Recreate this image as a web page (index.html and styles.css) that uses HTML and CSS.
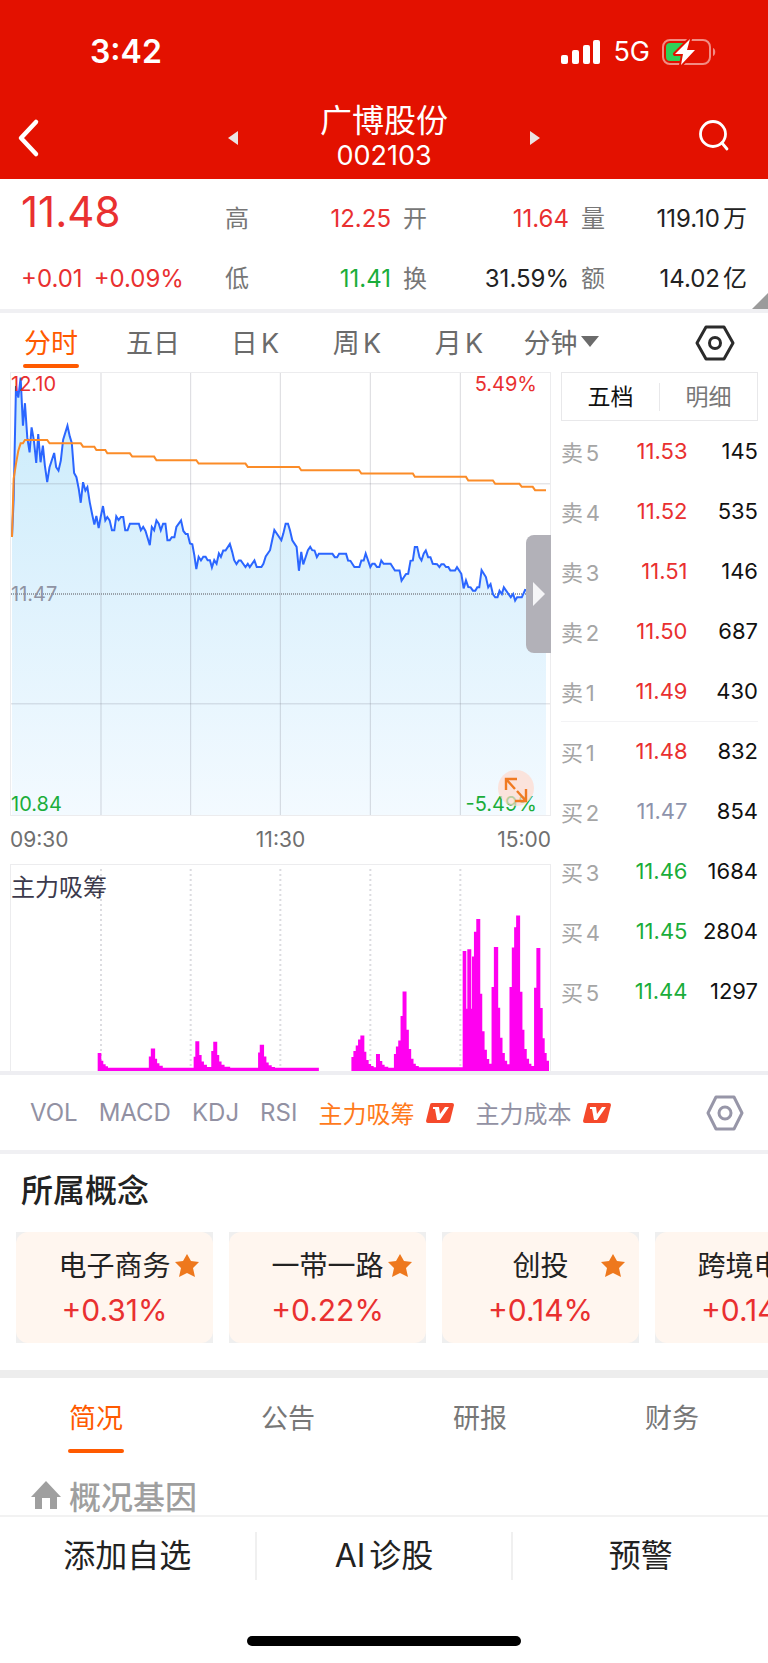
FILE: index.html
```
<!DOCTYPE html>
<html lang="zh-CN">
<head>
  <meta charset="UTF-8">
  <meta name="viewport" content="width=device-width, initial-scale=1.0, viewport-fit=cover">
  <meta name="format-detection" content="telephone=no">
  <title>广博股份 002103</title>
  <link rel="stylesheet" href="styles.css">
</head>
<body>
  <header class="header">
    <div class="status">
      <span class="status-time">3:42</span>
      <div class="status-right">
        <svg class="signal" viewBox="0 0 40 24" aria-hidden="true">
          <rect x="0" y="15" width="7" height="9" rx="2"/>
          <rect x="11" y="10" width="7" height="14" rx="2"/>
          <rect x="22" y="5" width="7" height="19" rx="2"/>
          <rect x="32" y="0" width="7" height="24" rx="2"/>
        </svg>
        <span class="status-net">5G</span>
        <svg class="battery" viewBox="0 0 54 28" aria-hidden="true">
          <rect x="1" y="2" width="47" height="24" rx="7" fill="none" stroke="#f28c83" stroke-width="2"/>
          <path d="M51 10c3 1 3 7 0 8z" fill="#f28c83"/>
          <path d="M8 5h14L13 16h7l-1 7H8a4 4 0 0 1-4-4V9a4 4 0 0 1 4-4z" fill="#30d158"/>
          <path d="M28 1 13 16h8l-2 11L33 12h-8z" fill="#fff" stroke="#e31100" stroke-width="4" stroke-linejoin="round" paint-order="stroke"/>
        </svg>
      </div>
    </div>
    <nav class="nav">
      <button class="nav-btn nav-back" aria-label="返回">
        <svg width="24" height="40" viewBox="0 0 24 40"><path d="M20 4 5 20l15 16" fill="none" stroke="#fff" stroke-width="4.5" stroke-linecap="round" stroke-linejoin="round"/></svg>
      </button>
      <div class="nav-stock">
        <button class="nav-btn" aria-label="上一只">
          <svg width="10" height="14" viewBox="0 0 10 14"><path d="M10 0v14L0 7z" fill="#ebe3e2"/></svg>
        </button>
        <h1 class="nav-title">广博股份<span class="nav-code">002103</span></h1>
        <button class="nav-btn" aria-label="下一只">
          <svg width="10" height="14" viewBox="0 0 10 14"><path d="M0 0v14l10-7z" fill="#ebe3e2"/></svg>
        </button>
      </div>
      <button class="nav-btn nav-search" aria-label="搜索">
        <svg width="32" height="32" viewBox="0 0 32 32"><g fill="none" stroke="#fff" stroke-width="2.8" stroke-linecap="round"><circle cx="15" cy="14" r="12.5"/><path d="m24 23 5 6"/></g></svg>
      </button>
    </nav>
  </header>

  <section class="quote">
    <div class="quote-main">
      <strong class="quote-price">11.48</strong>
      <div class="quote-change"><span>+0.01</span><span>+0.09%</span></div>
    </div>
    <dl class="quote-list">
      <div class="quote-item"><dt>高</dt><dd class="up">12.25</dd></div>
      <div class="quote-item"><dt>开</dt><dd class="up">11.64</dd></div>
      <div class="quote-item"><dt>量</dt><dd>119.10万</dd></div>
      <div class="quote-item"><dt>低</dt><dd class="down">11.41</dd></div>
      <div class="quote-item"><dt>换</dt><dd>31.59%</dd></div>
      <div class="quote-item"><dt>额</dt><dd>14.02亿</dd></div>
    </dl>
  </section>

  <div class="period">
    <button class="period-item period-item_active">分时</button>
    <button class="period-item">五日</button>
    <button class="period-item">日K</button>
    <button class="period-item">周K</button>
    <button class="period-item">月K</button>
    <button class="period-item">分钟<i class="caret"></i></button>
    <button class="period-setting" aria-label="图表设置">
      <svg width="40" height="36" viewBox="0 0 40 36"><g fill="none" stroke="#2b2b2b" stroke-width="3" stroke-linejoin="round"><path d="M11 2h18l9 16-9 16H11L2 18z"/><circle cx="20" cy="18" r="5.5"/></g></svg>
    </button>
  </div>

  <main class="market">
    <div class="charts">
      <div class="trend">
        <svg class="chart-svg" viewBox="30 21 1623 1332" preserveAspectRatio="none" role="img" aria-label="分时走势">
          <defs>
            <linearGradient id="area" x1="0" y1="0" x2="0" y2="1">
              <stop offset="0" stop-color="#c9ebfb"/>
              <stop offset=".5" stop-color="#dff2fd"/>
              <stop offset="1" stop-color="#f3faff"/>
            </linearGradient>
          </defs>
          <path fill="url(#area)" d="M33 1353V515L38 400 45 60 52 95 59 35 66 180 72 112 79 215 86 260 92 185 99 225 106 292 112 205 119 290 126 240 132 300 139 350 146 305 160 262 166 305 173 315 180 285 187 222 200 180 207 212 213 232 220 322 227 335 234 370 240 412 247 350 254 375 260 365 267 410 274 445 281 478 287 452 294 488 300 455 307 422 314 465 320 455 327 465 334 495 341 495 347 453 354 464 361 455 368 455 374 495 381 495 388 475 415 475 421 495 428 485 435 497 448 540 454 485 461 495 468 465 475 475 481 495 488 475 495 475 501 525 508 525 514 516 522 516 528 485 542 465 549 497 556 506 562 506 569 535 576 537 582 570 588 612 595 575 602 586 609 575 616 575 622 585 629 585 635 607 642 585 649 596 656 565 662 575 669 556 676 556 689 536 696 560 702 585 709 597 716 586 722 586 736 606 743 596 749 606 763 586 770 606 784 606 790 596 797 574 810 555 817 522 823 494 844 525 850 505 857 475 864 475 870 495 877 525 890 545 897 617 904 560 910 598 924 555 931 545 937 555 944 556 951 576 957 566 998 566 1005 576 1012 576 1018 566 1039 566 1045 586 1052 587 1064 606 1079 606 1085 586 1092 586 1098 565 1112 606 1118 596 1125 596 1132 606 1139 606 1145 586 1152 596 1173 596 1186 616 1200 616 1206 647 1219 627 1226 626 1233 587 1240 586 1246 545 1253 545 1260 576 1266 586 1273 565 1279 556 1286 576 1293 576 1300 596 1313 597 1320 606 1326 597 1333 597 1340 606 1347 606 1353 616 1367 616 1373 606 1386 626 1393 670 1400 646 1407 666 1414 667 1421 677 1428 677 1434 667 1440 667 1447 615 1460 636 1467 667 1474 657 1481 687 1488 697 1495 697 1501 677 1508 687 1514 667 1528 687 1535 697 1542 687 1548 707 1554 697 1568 697 1578 675 1600 680 1641 680V1353z"/>
          <path class="grid-line" d="M301 21V1353M571 21V1353M841 21V1353M1112 21V1353M1383 21V1353M30 355H1653M30 1018H1653"/>
          <path class="grid-base" d="M30 687H1653"/>
          <polyline class="line line-price" points="33,515 38,400 45,60 52,95 59,35 66,180 72,112 79,215 86,260 92,185 99,225 106,292 112,205 119,290 126,240 132,300 139,350 146,305 160,262 166,305 173,315 180,285 187,222 200,180 207,212 213,232 220,322 227,335 234,370 240,412 247,350 254,375 260,365 267,410 274,445 281,478 287,452 294,488 300,455 307,422 314,465 320,455 327,465 334,495 341,495 347,453 354,464 361,455 368,455 374,495 381,495 388,475 415,475 421,495 428,485 435,497 448,540 454,485 461,495 468,465 475,475 481,495 488,475 495,475 501,525 508,525 514,516 522,516 528,485 542,465 549,497 556,506 562,506 569,535 576,537 582,570 588,612 595,575 602,586 609,575 616,575 622,585 629,585 635,607 642,585 649,596 656,565 662,575 669,556 676,556 689,536 696,560 702,585 709,597 716,586 722,586 736,606 743,596 749,606 763,586 770,606 784,606 790,596 797,574 810,555 817,522 823,494 844,525 850,505 857,475 864,475 870,495 877,525 890,545 897,617 904,560 910,598 924,555 931,545 937,555 944,556 951,576 957,566 998,566 1005,576 1012,576 1018,566 1039,566 1045,586 1052,587 1064,606 1079,606 1085,586 1092,586 1098,565 1112,606 1118,596 1125,596 1132,606 1139,606 1145,586 1152,596 1173,596 1186,616 1200,616 1206,647 1219,627 1226,626 1233,587 1240,586 1246,545 1253,545 1260,576 1266,586 1273,565 1279,556 1286,576 1293,576 1300,596 1313,597 1320,606 1326,597 1333,597 1340,606 1347,606 1353,616 1367,616 1373,606 1386,626 1393,670 1400,646 1407,666 1414,667 1421,677 1428,677 1434,667 1440,667 1447,615 1460,636 1467,667 1474,657 1481,687 1488,697 1495,697 1501,677 1508,687 1514,667 1528,687 1535,697 1542,687 1548,707 1554,697 1568,697 1578,675 1600,680 1641,680"/>
          <polyline class="line line-avg" points="33,515 38,340 45,295 52,255 59,233 66,233 72,223 139,223 146,233 240,233 247,243 281,243 287,253 314,253 320,263 388,263 395,273 461,273 468,284 588,284 595,294 736,294 743,304 897,304 904,314 1078,314 1085,324 1240,324 1246,334 1400,334 1407,345 1481,345 1488,355 1561,355 1568,364 1601,364 1608,374 1641,374"/>
        </svg>
        <span class="mark mark_lt up">12.10</span>
        <span class="mark mark_rt up">5.49%</span>
        <span class="mark mark_lm">11.47</span>
        <span class="mark mark_lb down">10.84</span>
        <span class="mark mark_rb down">-5.49%</span>
        <button class="trend-fold" aria-label="收起盘口">
          <svg width="12" height="24" viewBox="0 0 12 24"><path d="M0 0v24l12-12z" fill="#f5f5f7"/></svg>
        </button>
        <button class="trend-full" aria-label="全屏">
          <svg width="36" height="36" viewBox="0 0 36 36"><path d="M8 20V9h11M8 9l9 10M28 19v12H17M28 31l-9-10" fill="none" stroke="#f07a22" stroke-width="2.4"/></svg>
        </button>
      </div>
      <div class="times"><span>09:30</span><span>11:30</span><span>15:00</span></div>
      <div class="volume">
        <svg class="chart-svg" viewBox="30 27 1623 621" preserveAspectRatio="none" role="img" aria-label="主力吸筹">
          <path class="grid-dot" d="M301 39V648M571 39V648M841 39V648M1112 39V648M1383 39V648"/>
          <path fill="#ff00f0" d="M291 648V594H302V617H308V628H315V634H322V638H445V604H451V580H464V611H470V625H477V632H487V638H580V605H585V558H597V600H604V619H611V629H620V636H633V588H639V560H651V600H657V619H664V629H673V635H690V638H774V592H779V569H792V604H799V622H806V631H815V636H825V638H957V648z"/>
          <path fill="#ff00f0" d="M1055 648V606H1061V588H1068V571H1075V553H1082V541H1094V590H1100V615H1107V627H1114V633H1122V637H1129V597H1141V618H1148V629H1155V635H1166V638H1183V597H1189V574H1196V556H1203V482H1209V408H1221V524H1228V582H1235V611H1242V626H1249V633H1258V637H1390V286H1401V460H1404V281H1416V460H1418V303H1424V228H1431V190H1443V415H1449V528H1456V584H1463V612H1470V626H1477V395H1484V274H1497V457H1503V548H1510V594H1517V617H1524V628H1531V395H1538V276H1545V215H1551V179H1563V409H1570V524H1576V582H1583V611H1590V626H1597V633H1605V397H1612V277H1624V458H1631V549H1637V594H1643V617H1650V648z"/>
        </svg>
        <span class="volume-name">主力吸筹</span>
      </div>
    </div>

    <div class="book">
      <div class="book-tabs">
        <button class="book-tab book-tab_active">五档</button>
        <button class="book-tab">明细</button>
      </div>
      <table class="book-table">
        <tbody>
          <tr><th scope="row">卖5</th><td class="up">11.53</td><td>145</td></tr>
          <tr><th scope="row">卖4</th><td class="up">11.52</td><td>535</td></tr>
          <tr><th scope="row">卖3</th><td class="up">11.51</td><td>146</td></tr>
          <tr><th scope="row">卖2</th><td class="up">11.50</td><td>687</td></tr>
          <tr><th scope="row">卖1</th><td class="up">11.49</td><td>430</td></tr>
        </tbody>
        <tbody class="book-buy">
          <tr><th scope="row">买1</th><td class="up">11.48</td><td>832</td></tr>
          <tr><th scope="row">买2</th><td class="flat">11.47</td><td>854</td></tr>
          <tr><th scope="row">买3</th><td class="down">11.46</td><td>1684</td></tr>
          <tr><th scope="row">买4</th><td class="down">11.45</td><td>2804</td></tr>
          <tr><th scope="row">买5</th><td class="down">11.44</td><td>1297</td></tr>
        </tbody>
      </table>
    </div>
  </main>

  <div class="index">
    <button class="index-item">VOL</button>
    <button class="index-item">MACD</button>
    <button class="index-item">KDJ</button>
    <button class="index-item">RSI</button>
    <button class="index-item index-item_active">主力吸筹
      <svg class="vip" viewBox="0 0 28 20" aria-hidden="true"><path d="M6 0h20q2 0 2 2l-4 16q-1 2-3 2H2q-2 0-2-2L4 2q0-2 2-2z" fill="#f5492b"/><path d="M7 4h6l1 7 5-7h4l-9 13h-3L9 6H7z" fill="#fff"/></svg>
    </button>
    <button class="index-item">主力成本
      <svg class="vip" viewBox="0 0 28 20" aria-hidden="true"><path d="M6 0h20q2 0 2 2l-4 16q-1 2-3 2H2q-2 0-2-2L4 2q0-2 2-2z" fill="#f5492b"/><path d="M7 4h6l1 7 5-7h4l-9 13h-3L9 6H7z" fill="#fff"/></svg>
    </button>
    <button class="index-setting" aria-label="指标设置">
      <svg width="38" height="36" viewBox="0 0 38 36"><g fill="none" stroke="#9796a8" stroke-width="3" stroke-linejoin="round"><path d="M10 2h18l8 16-8 16H10L2 18z"/><circle cx="19" cy="18" r="6"/></g></svg>
    </button>
  </div>

  <section class="concept">
    <h2 class="concept-title">所属概念</h2>
    <div class="concept-list">
      <a class="concept-card" href="#">
        <span class="concept-inner"><span class="concept-name">电子商务</span><span class="concept-rate">+0.31%</span></span>
        <svg class="star" viewBox="0 0 24 23" aria-hidden="true"><path d="m12 0 4 7 8 1-6 6 2 9-8-4-8 4 2-9-6-6 8-1z"/></svg>
      </a>
      <a class="concept-card" href="#">
        <span class="concept-inner"><span class="concept-name">一带一路</span><span class="concept-rate">+0.22%</span></span>
        <svg class="star" viewBox="0 0 24 23" aria-hidden="true"><path d="m12 0 4 7 8 1-6 6 2 9-8-4-8 4 2-9-6-6 8-1z"/></svg>
      </a>
      <a class="concept-card" href="#">
        <span class="concept-inner"><span class="concept-name">创投</span><span class="concept-rate">+0.14%</span></span>
        <svg class="star" viewBox="0 0 24 23" aria-hidden="true"><path d="m12 0 4 7 8 1-6 6 2 9-8-4-8 4 2-9-6-6 8-1z"/></svg>
      </a>
      <a class="concept-card" href="#">
        <span class="concept-inner"><span class="concept-name">跨境电商</span><span class="concept-rate">+0.14%</span></span>
      </a>
    </div>
  </section>

  <div class="info-tabs">
    <button class="info-tab info-tab_active">简况</button>
    <button class="info-tab">公告</button>
    <button class="info-tab">研报</button>
    <button class="info-tab">财务</button>
  </div>

  <div class="gene">
    <svg class="gene-icon" viewBox="0 0 30 28" aria-hidden="true"><path fill-rule="evenodd" d="m15 0 15 16h-4v12H4V16H0zM11 17v11h8V17z"/></svg>
    <h2 class="gene-title">概况基因</h2>
  </div>

  <footer class="footer">
    <div class="actions">
      <button class="action">添加自选</button>
      <button class="action">AI诊股</button>
      <button class="action">预警</button>
    </div>
    <div class="home-bar"></div>
  </footer>
</body>
</html>
```
FILE: styles.css
```
* {
  margin: 0;
  padding: 0;
  box-sizing: border-box;
}

body {
  font-family: Inter, "Noto Sans CJK SC", sans-serif;
  font-size: 24px;
  color: #222;
  background-color: #fff;
  overflow-x: hidden;
  text-autospace: normal;
}

button {
  font: inherit;
  color: inherit;
  border: none;
  background: none;
  cursor: pointer;
  white-space: nowrap;
}

svg {
  display: block;
}

.up {
  color: #e93030;
}

.down {
  color: #1aad3a;
}

.flat {
  color: #8e93ab;
}

/* 顶部 */
.header {
  height: 179px;
  background-color: #e31100;
  color: #fff;
}

.status {
  display: flex;
  justify-content: space-between;
  align-items: center;
  height: 103px;
  padding: 0 52px 0 90px;
}

.status-time {
  font-size: 32px;
  font-weight: 600;
}

.status-right {
  display: flex;
  align-items: center;
  gap: 12px;
}

.status-net {
  font-size: 27px;
}

.signal {
  width: 40px;
  height: 24px;
  fill: #fff;
}

.battery {
  width: 54px;
  height: 28px;
}

.nav {
  display: grid;
  grid-template-columns: 1fr 312px 1fr;
  height: 70px;
  padding: 0 16px;
}

.nav-stock {
  display: flex;
  justify-content: space-between;
}

.nav-btn {
  display: flex;
  align-items: center;
}

.nav-back {
  justify-self: start;
}

.nav-search {
  justify-self: end;
  padding: 0 22px 4px;
}

.nav-title {
  font-size: 32px;
  font-weight: 400;
  line-height: 35px;
  text-align: center;
}

.nav-code {
  display: block;
  font-size: 27px;
}

/* 行情 */
.quote {
  position: relative;
  display: grid;
  grid-template-columns: 204px 1fr;
  padding: 10px 21px 0;
  border-bottom: 4px solid #f0f0f3;
}

.quote:after {
  content: '';
  position: absolute;
  right: 0;
  bottom: 0;
  border-left: 16px solid transparent;
  border-bottom: 16px solid #9b9b9b;
}

.quote-main {
  color: #e93030;
}

.quote-price {
  display: block;
  height: 60px;
  font-size: 42px;
  font-weight: 400;
  line-height: 46px;
}

.quote-change {
  display: flex;
  gap: 11px;
  font-size: 24px;
  line-height: 60px;
}

.quote-list {
  display: grid;
  grid-template-columns: repeat(3, 1fr);
  column-gap: 12px;
}

.quote-item {
  display: flex;
  justify-content: space-between;
  font-size: 24px;
  line-height: 60px;
  white-space: nowrap;
}

.quote-item dt {
  color: #777;
}

/* 周期 */
.period {
  display: grid;
  grid-template-columns: repeat(6, 1fr) 156px;
  height: 59px;
}

.period-item {
  position: relative;
  display: flex;
  justify-content: center;
  align-items: center;
  height: 55px;
  padding-top: 2px;
  font-size: 27px;
  color: #6b6b6b;
}

.period-item_active,
.info-tab_active {
  color: #ff5a00;
}

.period-item_active:after,
.info-tab_active:after {
  content: '';
  position: absolute;
  left: 50%;
  bottom: 0;
  width: 56px;
  height: 4px;
  margin-left: -28px;
  border-radius: 2px;
  background-color: #ff5a00;
}

.caret {
  margin-left: 3px;
  border: 9px solid transparent;
  border-top: 11px solid #6b6b6b;
  border-bottom: none;
}

.period-setting {
  display: flex;
  justify-content: flex-end;
  align-items: center;
  padding-right: 33px;
}

/* 图表 */
.market {
  display: flex;
  gap: 10px;
  padding: 0 10px;
  border-bottom: 4px solid #eeeef2;
}

.charts {
  flex: 1;
  min-width: 0;
}

.trend,
.volume {
  position: relative;
  border: 1px solid #ececee;
}

.trend {
  height: 444px;
}

.volume {
  height: 207px;
  border-bottom: none;
}

.chart-svg {
  width: 100%;
  height: 100%;
}

.grid-line,
.grid-base,
.grid-dot,
.line {
  fill: none;
  vector-effect: non-scaling-stroke;
}

.grid-line {
  stroke: rgba(110, 110, 125, .26);
}

.grid-base {
  stroke: #9aa1a9;
  stroke-width: 2;
  stroke-dasharray: 1 1;
}

.grid-dot {
  stroke: #dcdce0;
  stroke-width: 2;
  stroke-dasharray: 2 3;
}

.line {
  stroke-width: 2;
}

.line-price {
  stroke: #2b66ff;
}

.line-avg {
  stroke: #fb8c28;
}

.mark {
  position: absolute;
  font-size: 20px;
  line-height: 22px;
}

.mark_lt,
.mark_lm,
.mark_lb {
  left: 0;
}

.mark_rt,
.mark_rb {
  right: 13px;
}

.mark_lt,
.mark_rt {
  top: 0;
}

.mark_lm {
  top: 50%;
  margin-top: -11px;
  color: #8f93a3;
}

.mark_lb,
.mark_rb {
  bottom: 0;
}

.trend-fold {
  position: absolute;
  top: 162px;
  right: -1px;
  display: flex;
  align-items: center;
  width: 25px;
  height: 118px;
  padding-left: 7px;
  border-radius: 8px 0 0 8px;
  background-color: #b2b1b8;
}

.trend-full {
  position: absolute;
  right: 16px;
  bottom: 9px;
  width: 36px;
  height: 36px;
  border-radius: 50%;
  background-color: rgba(255, 218, 205, .7);
}

.times {
  display: grid;
  grid-template-columns: repeat(3, 1fr);
  font-size: 21px;
  line-height: 48px;
  text-align: center;
  color: #6f6f6f;
}

.times span:first-child {
  text-align: left;
}

.times span:last-child {
  text-align: right;
}

.volume-name {
  position: absolute;
  top: 5px;
  left: 0;
  font-size: 24px;
  line-height: 36px;
  color: #3c3a4c;
}

/* 五档 */
.book {
  width: 197px;
}

.book-tabs {
  display: flex;
  align-items: center;
  height: 49px;
  border: 1px solid #e8e8ea;
}

.book-tab {
  flex: 1;
  font-size: 23px;
  line-height: 28px;
  color: #777;
}

.book-tab_active {
  border-right: 1px solid #e8e8ea;
  color: #111;
}

.book-table {
  width: 100%;
  table-layout: fixed;
  border-collapse: collapse;
  font-size: 22px;
}

.book-table tr {
  height: 60px;
}

.book-table th {
  width: 56px;
  font-weight: 400;
  font-size: 22px;
  text-align: left;
  color: #a5a5a5;
}

.book-table td {
  text-align: right;
}

.book-table td:last-child {
  color: #111;
}

.book-buy {
  border-top: 1px solid #f3f3f5;
}

/* 指标 */
.index {
  display: flex;
  align-items: center;
  gap: 21px;
  height: 79px;
  padding: 0 24px 0 30px;
  border-bottom: 4px solid #f0f0f3;
}

.index-item {
  display: flex;
  align-items: center;
  gap: 12px;
  font-size: 24px;
  color: #9291a3;
}

.index-item_active {
  color: #ff7a1c;
}

.vip {
  width: 28px;
  height: 20px;
}

.index-setting {
  margin-left: auto;
}

/* 所属概念 */
.concept {
  padding: 21px 0 27px;
  border-bottom: 8px solid #ededed;
}

.concept-title {
  padding-left: 21px;
  font-size: 32px;
  font-weight: 500;
  line-height: 32px;
}

.concept-list {
  display: flex;
  gap: 16px;
  margin-top: 25px;
  padding-left: 16px;
  overflow: hidden;
}

.concept-card {
  position: relative;
  flex: 0 0 197px;
  background-color: #efefef;
  color: #222;
  text-align: center;
  text-decoration: none;
}

.concept-inner {
  display: block;
  padding: 14px 0 9px;
  border-radius: 12px;
  background-color: #fff6ef;
}

.concept-name {
  display: block;
  font-size: 28px;
  line-height: 40px;
}

.concept-rate {
  display: block;
  font-size: 30px;
  line-height: 48px;
  color: #e93030;
}

.star {
  position: absolute;
  top: 22px;
  right: 14px;
  width: 24px;
  height: 23px;
  fill: #ee781d;
}

/* 资料 */
.info-tabs {
  display: flex;
  height: 75px;
}

.info-tab {
  position: relative;
  flex: 1;
  padding-top: 2px;
  font-size: 27px;
  color: #777;
}

.info-tab_active {
  color: #ff5a00;
}

.gene {
  display: flex;
  align-items: center;
  gap: 8px;
  height: 62px;
  padding: 28px 31px 0;
  color: #9f9f9f;
}

.gene-icon {
  width: 30px;
  height: 28px;
  margin-bottom: 6px;
  fill: #9f9f9f;
}

.gene-title {
  font-size: 32px;
  font-weight: 500;
  line-height: 34px;
}

/* 底部 */
.footer {
  border-top: 2px solid #f2f2f2;
  background-color: #fff;
}

.actions {
  display: flex;
  align-items: center;
  height: 78px;
}

.action {
  flex: 1;
  font-size: 32px;
  line-height: 48px;
}

.action + .action {
  border-left: 2px solid #f0f0f0;
}

.home-bar {
  width: 274px;
  height: 10px;
  margin: 41px auto 17px;
  border-radius: 5px;
  background-color: #000;
}
```
